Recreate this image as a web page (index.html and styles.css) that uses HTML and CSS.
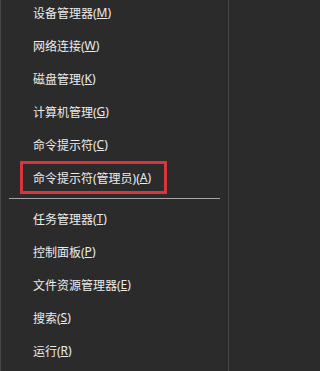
FILE: index.html
```html
<!DOCTYPE html>
<html lang="zh-CN">
<head>
<meta charset="utf-8">
<link rel="stylesheet" href="styles.css">
</head>
<body>
<div class="menu">
  <ul class="list">
    <li class="item">设备管理器(<u>M</u>)</li>
    <li class="item">网络连接(<u>W</u>)</li>
    <li class="item">磁盘管理(<u>K</u>)</li>
    <li class="item">计算机管理(<u>G</u>)</li>
    <li class="item">命令提示符(<u>C</u>)</li>
    <li class="item selected">命令提示符(管理员)(<u>A</u>)</li>
    <li class="sep"></li>
    <li class="item">任务管理器(<u>T</u>)</li>
    <li class="item">控制面板(<u>P</u>)</li>
    <li class="item">文件资源管理器(<u>E</u>)</li>
    <li class="item">搜索(<u>S</u>)</li>
    <li class="item">运行(<u>R</u>)</li>
  </ul>
</div>
</body>
</html>
```
FILE: styles.css
```css
html, body {
  margin: 0;
  padding: 0;
  background: #2b2b2b;
}
.menu {
  width: 229px;
  height: 371px;
  box-sizing: border-box;
  overflow: hidden;
  background: #2b2b2b;
  border-left: 1px solid #474747;
  border-right: 1px solid #474747;
}
.list {
  list-style: none;
  margin: -4px 0 0 0;
  padding: 0;
}
.item {
  height: 33px;
  box-sizing: border-box;
  display: flex;
  align-items: center;
  padding-left: 32px;
  color: #ececec;
  font-family: "Noto Sans", "Noto Sans CJK SC", sans-serif;
  font-size: 12px;
  letter-spacing: 0;
  white-space: nowrap;
}
.item u {
  text-decoration: underline;
  text-underline-offset: 1px;
}
.item.selected {
  margin-left: 19px;
  width: 147px;
  padding-left: 10px;
  border: 3px solid #d8353c;
}
.sep {
  height: 8px;
  display: flex;
  align-items: center;
  padding: 0 8px 0 8px;
}
.sep::before {
  content: "";
  display: block;
  flex: 1;
  height: 1px;
  background: #a6a6a6;
}
```
